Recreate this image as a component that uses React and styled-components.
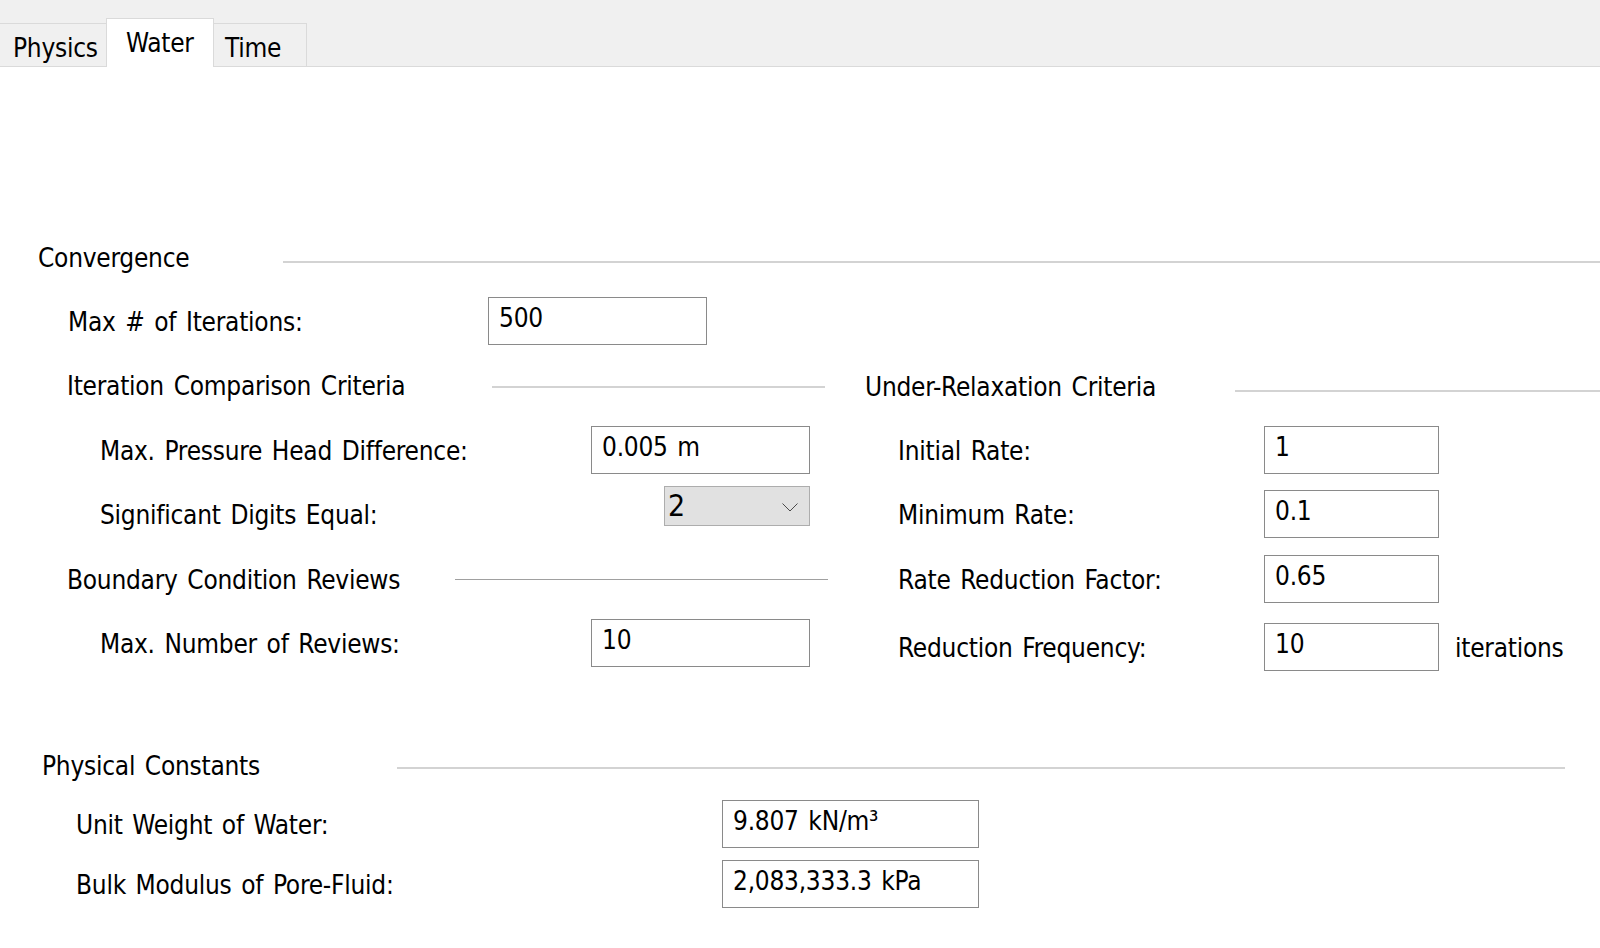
import React from 'react';
import styled, { createGlobalStyle } from 'styled-components';

const GlobalStyle = createGlobalStyle`
  html, body { margin: 0; padding: 0; background: #ffffff; }
  body {
    font-family: 'DejaVu Sans Condensed', 'DejaVu Sans', sans-serif;
    color: #000;
  }
`;

const Window = styled.div`
  width: 1600px;
  height: 948px;
  overflow: hidden;
  background: #ffffff;
  font-size: 26px;
  line-height: 30px;
  letter-spacing: -0.25px;
  word-spacing: 2.5px;
`;

const TabStrip = styled.div`
  display: flex;
  align-items: flex-end;
  height: 66px;
  background: #f0f0f0;
  border-bottom: 1px solid #dadada;
`;

const Tab = styled.div`
  box-sizing: border-box;
  width: ${p => p.$w}px;
  height: ${p => (p.$active ? 49 : 43)}px;
  margin-bottom: ${p => (p.$active ? -1 : 0)}px;
  padding: 9px 0 0 ${p => p.$pl}px;
  background: ${p => (p.$active ? '#ffffff' : '#f0f0f0')};
  border-top: 1px solid #dadada;
  border-left: ${p => (p.$active ? '1px solid #dadada' : 'none')};
  border-right: ${p => (p.$active || p.$last ? '1px solid #dadada' : 'none')};
  white-space: nowrap;
`;

const Panel = styled.div`
  padding: 175px 0 0 38px;
`;

const Head = styled.div`
  display: grid;
  grid-template-columns: ${p => p.$lead}px 1fr;
  height: 30px;
  margin: ${p => p.$top || 0}px ${p => p.$trail || 0}px 0 ${p => p.$indent || 0}px;
`;

const HeadTitle = styled.span`
  padding-top: 1px;
  white-space: nowrap;
`;

const Rule = styled.div`
  margin-top: ${p => p.$at}px;
  height: ${p => (p.$thin ? 1 : 2)}px;
  background: ${p => (p.$thin ? '#a0a0a0' : '#d3d3d3')};
`;

const Row = styled.div`
  display: grid;
  grid-template-columns: ${p => p.$label}px ${p => p.$field}px auto;
  align-items: center;
  min-height: ${p => p.$h || 48}px;
  margin: ${p => p.$top || 0}px 0 0 ${p => p.$indent || 0}px;
`;

const Label = styled.span`
  padding-top: 2px;
  white-space: nowrap;
`;

const TextBox = styled.div`
  box-sizing: border-box;
  height: 48px;
  border: 1px solid #8a8a8a;
  background: #ffffff;
  padding: 5px 0 0 10px;
  white-space: nowrap;
`;

const Select = styled.div`
  justify-self: end;
  align-self: start;
  box-sizing: border-box;
  display: flex;
  justify-content: space-between;
  align-items: flex-start;
  width: 146px;
  height: 40px;
  padding: 2px 11px 0 3px;
  background: #e1e1e1;
  border: 1px solid #adadad;
  font-size: 30px;
  line-height: 34px;
`;

const Chevron = styled.svg`
  margin-top: 14px;
  flex-shrink: 0;
`;

const Unit = styled.span`
  margin-left: 16px;
  padding-top: 2px;
  white-space: nowrap;
`;

const Columns = styled.div`
  display: grid;
  grid-template-columns: 798px 1fr;
  align-items: start;
  margin-left: 29px;
`;

const Column = styled.div`
  display: flex;
  flex-direction: column;
`;

const Field = ({ label, value, unit, ...rest }) => (
  <Row {...rest}>
    <Label>{label}</Label>
    <TextBox>{value}</TextBox>
    {unit && <Unit>{unit}</Unit>}
  </Row>
);

const App = () => {
  return (
    <Window>
      <GlobalStyle />
      <TabStrip>
        <Tab $w={106} $pl={13}>Physics</Tab>
        <Tab $w={108} $pl={19} $active>Water</Tab>
        <Tab $w={93} $pl={11} $last>Time</Tab>
      </TabStrip>

      <Panel>
        <Head $lead={245}>
          <HeadTitle>Convergence</HeadTitle>
          <Rule $at={19} />
        </Head>
        <Field $top={25} $indent={30} $label={420} $field={219} label="Max # of Iterations:" value="500" />

        <Columns>
          <Column>
            <Head $top={25} $lead={425} $trail={40}>
              <HeadTitle>Iteration Comparison Criteria</HeadTitle>
              <Rule $at={16} />
            </Head>
            <Field $top={26} $indent={33} $label={491} $field={219} label="Max. Pressure Head Difference:" value="0.005 m" />
            <Row $top={12} $h={56} $indent={33} $label={491} $field={219}>
              <Label>Significant Digits Equal:</Label>
              <Select>
                <span>2</span>
                <Chevron width="16" height="9" viewBox="0 0 16 9">
                  <polyline points="0.5,0.5 8,8 15.5,0.5" fill="none" stroke="#4a4a4a" strokeWidth="1" />
                </Chevron>
              </Select>
            </Row>
            <Head $top={22} $lead={388} $trail={37}>
              <HeadTitle>Boundary Condition Reviews</HeadTitle>
              <Rule $at={15} $thin />
            </Head>
            <Field $top={25} $indent={33} $label={491} $field={219} label="Max. Number of Reviews:" value="10" />
          </Column>

          <Column>
            <Head $top={26} $lead={370}>
              <HeadTitle>Under-Relaxation Criteria</HeadTitle>
              <Rule $at={19} />
            </Head>
            <Field $top={25} $indent={33} $label={366} $field={175} label="Initial Rate:" value="1" />
            <Field $top={16} $indent={33} $label={366} $field={175} label="Minimum Rate:" value="0.1" />
            <Field $top={17} $indent={33} $label={366} $field={175} label="Rate Reduction Factor:" value="0.65" />
            <Field $top={20} $indent={33} $label={366} $field={175} label="Reduction Frequency:" value="10" unit="iterations" />
          </Column>
        </Columns>

        <Head $top={79} $indent={4} $lead={355} $trail={35}>
          <HeadTitle>Physical Constants</HeadTitle>
          <Rule $at={17} />
        </Head>
        <Field $top={20} $indent={38} $label={646} $field={257} label="Unit Weight of Water:" value="9.807 kN/m³" />
        <Field $top={12} $indent={38} $label={646} $field={257} label="Bulk Modulus of Pore-Fluid:" value="2,083,333.3 kPa" />
      </Panel>
    </Window>
  );
};

export default App;
